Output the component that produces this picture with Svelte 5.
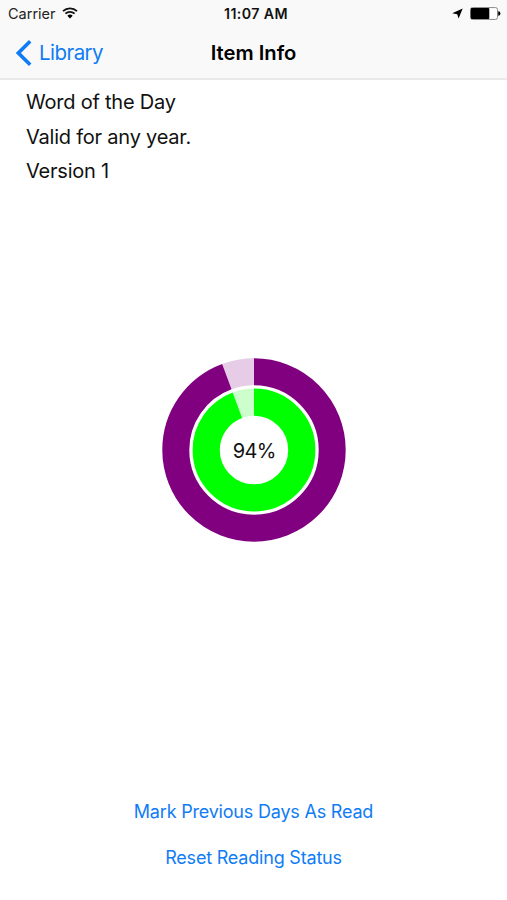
<script>
	const info = ['Word of the Day', 'Valid for any year.', 'Version 1'];
	const actions = ['Mark Previous Days As Read', 'Reset Reading Status'];

	/** Share of the days that were read, 0 to 1. */
	const progress = 0.9435;

	const rings = [
		{ name: 'year', radius: 78.2, width: 27 },
		{ name: 'today', radius: 47.8, width: 27.2 }
	];
</script>

<div class="screen">
	<header>
		<div class="statusbar">
			<div class="carrier">
				<span>Carrier</span>
				<svg width="16" height="12" viewBox="0 0 16 12">
					<path d="M1 4.2 A10.2 10.2 0 0 1 15 4.2" />
					<path d="M3.4 6.7 A6.7 6.7 0 0 1 12.6 6.7" />
					<path class="solid" d="M5.3 8.7 A4 4 0 0 1 10.7 8.7 L8 11.5 Z" />
				</svg>
			</div>
			<span class="time">11:07 AM</span>
			<div class="indicators">
				<svg width="11" height="11" viewBox="0 0 11 11">
					<path class="solid" d="M10.7 0.4 L6.6 10.4 L5.2 6.2 L0.2 5.2 Z" />
				</svg>
				<svg class="battery" width="31" height="13" viewBox="0 0 31 13">
					<rect class="case" x="0.5" y="0.6" width="27" height="11.8" rx="2" />
					<rect class="solid" x="0.8" y="1.1" width="18.5" height="10.8" rx="1" />
					<path class="solid" d="M28.2 4.3 A2.2 2.2 0 0 1 28.2 8.7 Z" />
				</svg>
			</div>
		</div>
		<nav>
			<a class="back" href="#library">
				<svg width="16" height="26" viewBox="0 0 16 26">
					<path d="M14.2 1.3 L2.4 13 L14.2 24.7" />
				</svg>
				<span>Library</span>
			</a>
			<h1>Item Info</h1>
		</nav>
	</header>

	<section class="info">
		{#each info as line}
			<p>{line}</p>
		{/each}
	</section>

	<section class="chart">
		<svg width="184" height="184" viewBox="-92 -92 184 184">
			{#each rings as ring}
				<g class={ring.name} transform="rotate(-90)" stroke-width={ring.width}>
					<circle class="rest" r={ring.radius} pathLength="1" stroke-dasharray="0 {progress} {1 - progress} 0" />
					<circle r={ring.radius} pathLength="1" stroke-dasharray="{progress} 1" />
				</g>
			{/each}
			<text x="0.2" y="7.5">94%</text>
		</svg>
	</section>

	<footer>
		{#each actions as action}
			<button>{action}</button>
		{/each}
	</footer>
</div>

<style>
	:global(body) {
		margin: 0;
	}

	.screen {
		display: flex;
		flex-direction: column;
		height: 900px;
		background: #fff;
		color: #111;
		font-family: Inter, 'Liberation Sans', sans-serif;
	}

	header {
		box-sizing: border-box;
		height: 80px;
		background: #f9f9f9;
		border-bottom: 2px solid #e9e9e9;
	}

	.statusbar,
	nav {
		display: grid;
		grid-template-columns: 1fr auto 1fr;
		align-items: center;
	}

	.statusbar {
		height: 27px;
		padding: 0 6px 0 8px;
		font-size: 14.5px;
	}

	.carrier,
	.indicators,
	.back {
		display: flex;
		align-items: center;
	}

	.carrier {
		gap: 6px;
		color: #222;
	}

	.carrier svg {
		margin-top: -2px;
	}

	.carrier path {
		fill: none;
		stroke: #111;
		stroke-width: 1.8;
	}

	.time {
		padding-left: 3px;
		font-weight: 600;
		font-size: 14.2px;
		letter-spacing: 0.4px;
	}

	.indicators {
		justify-content: flex-end;
		gap: 7px;
	}

	.carrier .solid,
	.solid {
		fill: #000;
		stroke: none;
	}

	.case {
		fill: #fff;
		stroke: #888;
	}

	nav {
		height: 51px;
		padding: 0 16px;
	}

	.back {
		gap: 7px;
		color: #0f7cf5;
		font-size: 20.5px;
		letter-spacing: -0.55px;
		text-decoration: none;
	}

	.back path {
		fill: none;
		stroke: #0f7cf5;
		stroke-width: 3.6;
	}

	h1 {
		margin: 0;
		color: #000;
		font-size: 20.2px;
		font-weight: 600;
	}

	.info {
		padding: 5px 26px 0;
	}

	p {
		margin: 0;
		font-size: 20px;
		letter-spacing: -0.22px;
		line-height: 34.5px;
	}

	.chart {
		display: flex;
		flex: 1;
		align-items: center;
		justify-content: center;
		padding-bottom: 76px;
	}

	circle {
		fill: none;
	}

	.year {
		stroke: #800080;
	}

	.today {
		stroke: #00ff00;
	}

	.year .rest {
		stroke: #e6cce6;
	}

	.today .rest {
		stroke: #ccffcc;
	}

	text {
		fill: #111;
		font-size: 20px;
		letter-spacing: -0.6px;
		text-anchor: middle;
	}

	footer {
		display: flex;
		flex-direction: column;
		align-items: center;
		padding-bottom: 19px;
	}

	button {
		height: 46.5px;
		padding: 0;
		border: 0;
		background: none;
		color: #0f7cf5;
		font-family: inherit;
		font-size: 18px;
		letter-spacing: -0.2px;
	}
</style>
